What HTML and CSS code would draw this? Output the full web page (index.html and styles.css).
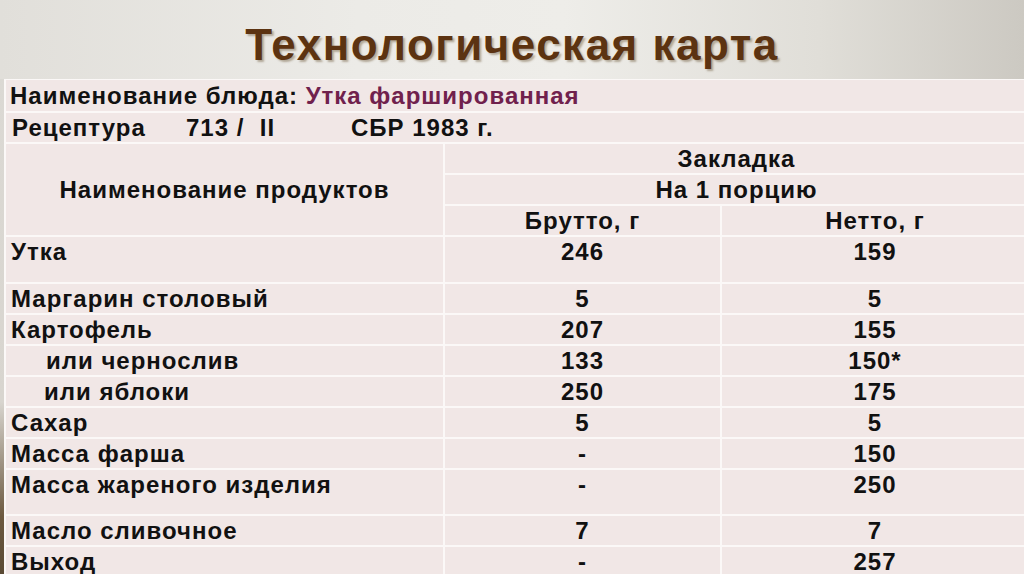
FILE: index.html
```html
<!DOCTYPE html>
<html lang="ru">
<head>
<meta charset="utf-8">
<title>Технологическая карта</title>
<link rel="stylesheet" href="styles.css">
</head>
<body>
<div class="slide">
  <header class="title-bar">
    <h1 class="title">Технологическая карта</h1>
  </header>
  <div class="table-wrap">
    <table class="card">
      <colgroup>
        <col class="c-name">
        <col class="c-brutto">
        <col class="c-netto">
      </colgroup>
      <tr class="r-info">
        <td colspan="3" class="info">Наименование блюда: <span class="dish">Утка фаршированная</span></td>
      </tr>
      <tr class="r-info2">
        <td colspan="3" class="info info2"><span class="rec">Рецептура</span><span class="num">713 /&nbsp; II</span><span class="src">СБР 1983 г.</span></td>
      </tr>
      <tr class="r-h">
        <td rowspan="3" class="h-name">Наименование продуктов</td>
        <td colspan="2" class="center">Закладка</td>
      </tr>
      <tr class="r-h">
        <td colspan="2" class="center">На 1 порцию</td>
      </tr>
      <tr class="r-h">
        <td class="center">Брутто, г</td>
        <td class="center">Нетто, г</td>
      </tr>
      <tr class="r-tall">
        <td>Утка</td><td class="center">246</td><td class="center">159</td>
      </tr>
      <tr class="r">
        <td>Маргарин столовый</td><td class="center">5</td><td class="center">5</td>
      </tr>
      <tr class="r">
        <td>Картофель</td><td class="center">207</td><td class="center">155</td>
      </tr>
      <tr class="r">
        <td class="ind1">или чернослив</td><td class="center">133</td><td class="center">150*</td>
      </tr>
      <tr class="r">
        <td class="ind2">или яблоки</td><td class="center">250</td><td class="center">175</td>
      </tr>
      <tr class="r">
        <td>Сахар</td><td class="center">5</td><td class="center">5</td>
      </tr>
      <tr class="r">
        <td>Масса фарша</td><td class="center">-</td><td class="center">150</td>
      </tr>
      <tr class="r-tall2">
        <td>Масса жареного изделия</td><td class="center">-</td><td class="center">250</td>
      </tr>
      <tr class="r">
        <td>Масло сливочное</td><td class="center">7</td><td class="center">7</td>
      </tr>
      <tr class="r">
        <td>Выход</td><td class="center">-</td><td class="center">257</td>
      </tr>
    </table>
  </div>
</div>
</body>
</html>
```
FILE: styles.css
```css
html, body {
  margin: 0;
  padding: 0;
}
body {
  width: 1024px;
  height: 574px;
  overflow: hidden;
  font-family: "Liberation Sans", Arial, sans-serif;
  background: linear-gradient(180deg, #dcdad5 0%, #d8d5cf 70%, #6d5a40 90%, #5a4a34 100%);
}
.slide {
  width: 1024px;
  height: 574px;
  display: flex;
  flex-direction: column;
}
.title-bar {
  height: 79px;
  flex: none;
  display: flex;
  align-items: center;
  justify-content: center;
  background: linear-gradient(90deg, #e1dfda 0%, #ecebe7 35%, #eeede9 55%, #e0ded8 80%, #ccc9c2 100%);
}
.title {
  margin: 0;
  padding-top: 10px;
  font-size: 44px;
  font-weight: bold;
  color: #5c3311;
  text-shadow: 2px 2px 2px rgba(110, 90, 60, 0.45);
  letter-spacing: 1.5px;
}
.table-wrap {
  flex: 1;
  padding-left: 4px;
  overflow: hidden;
}
.card {
  border-collapse: collapse;
  table-layout: fixed;
  width: 1024px;
  background: #f1e7e6;
  margin-top: -1px;
}
.c-name { width: 439px; }
.c-brutto { width: 277px; }
.c-netto { width: 308px; }
.card td {
  border: 2px solid #fbf8f7;
  font-size: 24px;
  letter-spacing: 1px;
  font-weight: bold;
  color: #111;
  padding: 0 0 0 5px;
  vertical-align: top;
  line-height: 29px;
  white-space: nowrap;
}
.card td.center {
  text-align: center;
  padding-left: 0;
}
.r-info td { height: 30px; padding-top: 1px; }
.r-info2 td { height: 29px; }
.r-h td { height: 29px; }
.r-tall td { height: 45px; }
.r-tall2 td { height: 44px; }
.r td { height: 29px; }
.card td.info {
  padding-left: 4px;
}
.dish {
  color: #70214d;
}
.rec { display: inline-block; width: 174px; padding-left: 2px; }
.num { display: inline-block; width: 165px; }
.card td.h-name {
  vertical-align: middle;
  text-align: center;
  padding-left: 0;
}
.card td.ind1 { padding-left: 40px; }
.card td.ind2 { padding-left: 38px; }
```
